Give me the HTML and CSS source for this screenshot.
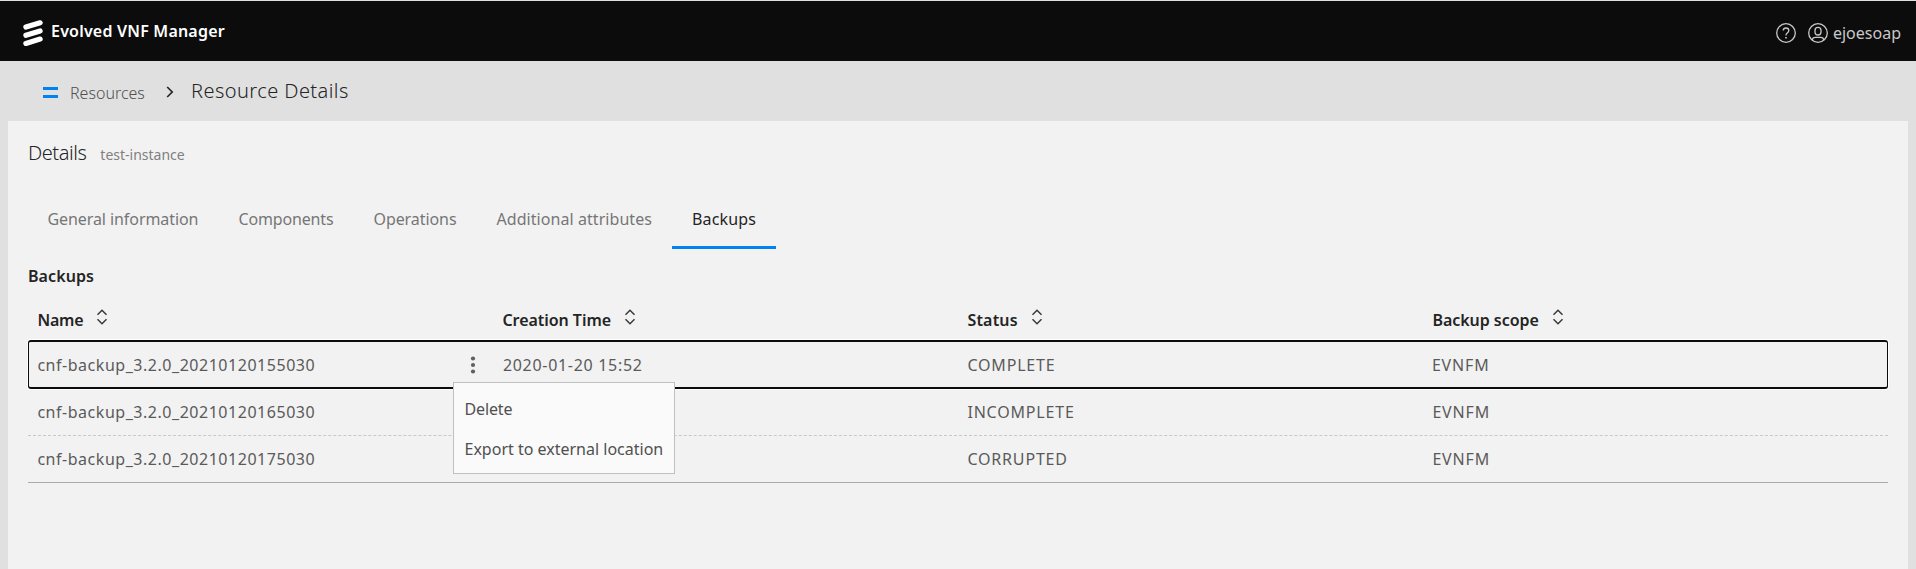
FILE: index.html
```
<!DOCTYPE html>
<html lang="en">
<head>
<meta charset="utf-8">
<title>Evolved VNF Manager</title>
<link rel="stylesheet" href="styles.css">
</head>
<body>
<header class="topbar">
  <div class="brand">
    <svg class="brand-logo" width="20" height="27" viewBox="0 0 20 27" fill="none" stroke="#fff" stroke-width="5.2" stroke-linecap="round"><path d="M2.9 7.1 17.1 2.8M2.9 15.3 17.1 11M2.9 23.4 17.1 19.1"/></svg>
    <span class="brand-name">Evolved VNF Manager</span>
  </div>
  <div class="user">
    <svg width="20" height="20" viewBox="0 0 20 20" fill="none" stroke="#c8c8c8" stroke-width="1.3"><circle cx="10" cy="10" r="9.3"/><path d="M7.3 7.5C7.3 5.8 8.4 5 10 5s2.8 1 2.8 2.5c0 1.3-.8 1.9-1.6 2.6-.8.6-1.2 1.2-1.2 2.4"/><path d="M10 14v1.6" stroke-width="1.6"/></svg>
    <svg class="avatar" width="20" height="20" viewBox="0 0 20 20" fill="none" stroke="#c8c8c8" stroke-width="1.3"><circle cx="10" cy="10" r="9.3"/><rect x="7" y="4.4" width="6" height="7.6" rx="3"/><path d="M4.2 17.2C4.4 15 5.6 14.3 7.4 14.3h5.2c1.8 0 3 .7 3.2 2.9"/></svg>
    <span>ejoesoap</span>
  </div>
</header>
<nav class="breadcrumb">
  <span class="menu-toggle"></span>
  <span class="crumb">Resources</span>
  <svg class="chevron" width="8" height="12" viewBox="0 0 8 12" fill="none" stroke="#242424" stroke-width="1.7"><path d="M1.2 1 6.2 6 1.2 11"/></svg>
  <span class="crumb-current">Resource Details</span>
</nav>
<main class="panel">
  <div class="panel-title"><h1>Details</h1><span class="subtitle">test-instance</span></div>
  <div class="tabs">
    <span class="tab">General information</span>
    <span class="tab tab-components">Components</span>
    <span class="tab">Operations</span>
    <span class="tab tab-attributes">Additional attributes</span>
    <span class="tab active">Backups</span>
  </div>
  <h2>Backups</h2>
  <div class="table">
    <div class="row head">
      <div class="cell"><span class="h-name">Name</span><svg class="sort" width="12" height="16" viewBox="0 0 12 16"><path d="M1.5 5.7 6 1.2l4.5 4.5M1.5 10.3 6 14.8l4.5-4.5"/></svg></div>
      <div class="cell"><span>Creation Time</span><svg class="sort" width="12" height="16" viewBox="0 0 12 16"><path d="M1.5 5.7 6 1.2l4.5 4.5M1.5 10.3 6 14.8l4.5-4.5"/></svg></div>
      <div class="cell"><span class="h-status">Status</span><svg class="sort" width="12" height="16" viewBox="0 0 12 16"><path d="M1.5 5.7 6 1.2l4.5 4.5M1.5 10.3 6 14.8l4.5-4.5"/></svg></div>
      <div class="cell"><span>Backup scope</span><svg class="sort" width="12" height="16" viewBox="0 0 12 16"><path d="M1.5 5.7 6 1.2l4.5 4.5M1.5 10.3 6 14.8l4.5-4.5"/></svg></div>
    </div>
    <div class="row selected">
      <div class="cell id"><span>cnf-backup_3.2.0_20210120155030</span>
        <div class="kebab"><svg width="6" height="18" viewBox="0 0 6 18" fill="#606060"><circle cx="3" cy="2.5" r="2.1"/><circle cx="3" cy="9" r="2.1"/><circle cx="3" cy="15.5" r="2.1"/></svg>
          <div class="menu"><div class="menu-item delete">Delete</div><div class="menu-item">Export to external location</div></div>
        </div>
      </div>
      <div class="cell date">2020-01-20 15:52</div>
      <div class="cell caps">COMPLETE</div>
      <div class="cell caps">EVNFM</div>
    </div>
    <div class="row">
      <div class="cell id">cnf-backup_3.2.0_20210120165030</div>
      <div class="cell"></div>
      <div class="cell caps">INCOMPLETE</div>
      <div class="cell caps">EVNFM</div>
    </div>
    <div class="row last">
      <div class="cell id">cnf-backup_3.2.0_20210120175030</div>
      <div class="cell"></div>
      <div class="cell caps">CORRUPTED</div>
      <div class="cell caps">EVNFM</div>
    </div>
  </div>
</main>
</body>
</html>
```
FILE: styles.css
```
* { box-sizing: border-box; }
body {
  margin: 0;
  height: 569px;
  display: flex;
  flex-direction: column;
  overflow: hidden;
  background: #e0e0e0;
  color: #242424;
  font: 400 16px/24px "Noto Sans", "Open Sans", sans-serif;
}
h1, h2 { margin: 0; }

.topbar {
  height: 61px;
  flex: none;
  display: flex;
  justify-content: space-between;
  border-top: 1px solid #dde0e2;
  background: #0c0c0c;
  padding: 0 15px 0 23px;
}
.brand { display: flex; align-items: center; }
.brand-logo { margin: 5px 8px 0 0; }
.brand-name { color: #fff; font-weight: 600; letter-spacing: .2px; }
.user { display: flex; align-items: center; padding-top: 4px; color: #c8c8c8; }
.avatar { margin: 0 5px 0 12px; }

.breadcrumb {
  height: 60px;
  flex: none;
  display: flex;
  align-items: center;
  padding: 1px 0 0 43px;
}
.menu-toggle {
  width: 15px;
  height: 11px;
  margin: 2px 12px 0 0;
  border: solid #0082f0;
  border-width: 3px 0;
}
.crumb { width: 96px; padding-top: 3px; color: #505050; font-weight: 350; letter-spacing: 0; }
.chevron { margin-right: 17px; }
.crumb-current { padding-bottom: 2px; font-size: 20px; font-weight: 350; letter-spacing: .43px; }

.panel {
  flex: 1;
  margin: 0 8px;
  padding: 20px 20px 0;
  background: #f2f2f2;
}
.panel-title { display: flex; align-items: baseline; height: 24px; }
h1 { font-size: 20px; font-weight: 350; letter-spacing: -.45px; }
.subtitle { margin-left: 14px; color: #808080; font-size: 14px; }

.tabs { display: flex; height: 61px; margin: 23px 0 0 -.6px; }
.tab { padding: 19px 20px 0; color: #767676; letter-spacing: -.07px; }
.tab-components { letter-spacing: -.15px; }
.tab-attributes { letter-spacing: .06px; }
.tab.active {
  color: #242424;
  letter-spacing: .15px;
  border-bottom: 3px solid #0082f0;
}

h2 { margin-top: 15px; font-size: 16px; font-weight: 600; line-height: 24px; letter-spacing: .08px; }

.row {
  display: grid;
  grid-template-columns: repeat(4, 1fr);
  height: 47px;
  border-bottom: 1px dashed #c8c8c8;
  color: #5a5a5a;
  font-weight: 370;
}
.cell { display: flex; align-items: center; padding: 0 10px 0 9.4px; }
.row.head {
  height: 53px;
  border: 0;
  color: #242424;
  font-weight: 600;
}
.head .cell { padding-top: 10px; letter-spacing: -.04px; }
.h-name { letter-spacing: -.2px; }
.h-status { letter-spacing: .2px; }
.sort { margin: -5px 0 0 13px; fill: none; stroke: #3a3a3a; stroke-width: 1.5; }
.row.selected {
  position: relative;
  height: 49px;
  margin-top: -1px;
  border: solid #0c0c0c;
  border-width: 2px 1px;
  border-radius: 3px;
  box-shadow: 0 0 0 1px #fff;
}
.selected .cell:first-child { padding-left: 8.4px; }
.row.last { border-bottom: 1px solid #aaa; }
.id { letter-spacing: .53px; }
.date { letter-spacing: .7px; }
.caps { letter-spacing: .82px; }

.kebab { position: relative; display: flex; margin-left: auto; margin-right: 8px; }
.menu {
  position: absolute;
  top: 26px;
  left: -17px;
  width: 222px;
  height: 92px;
  padding: 6px 11px;
  border: 1px solid #c0c0c0;
  background: #fafafa;
  color: #505050;
  font-weight: 400;
  letter-spacing: 0;
  white-space: nowrap;
}
.menu-item { height: 40px; line-height: 40px; }
.delete { letter-spacing: -.15px; }
```
